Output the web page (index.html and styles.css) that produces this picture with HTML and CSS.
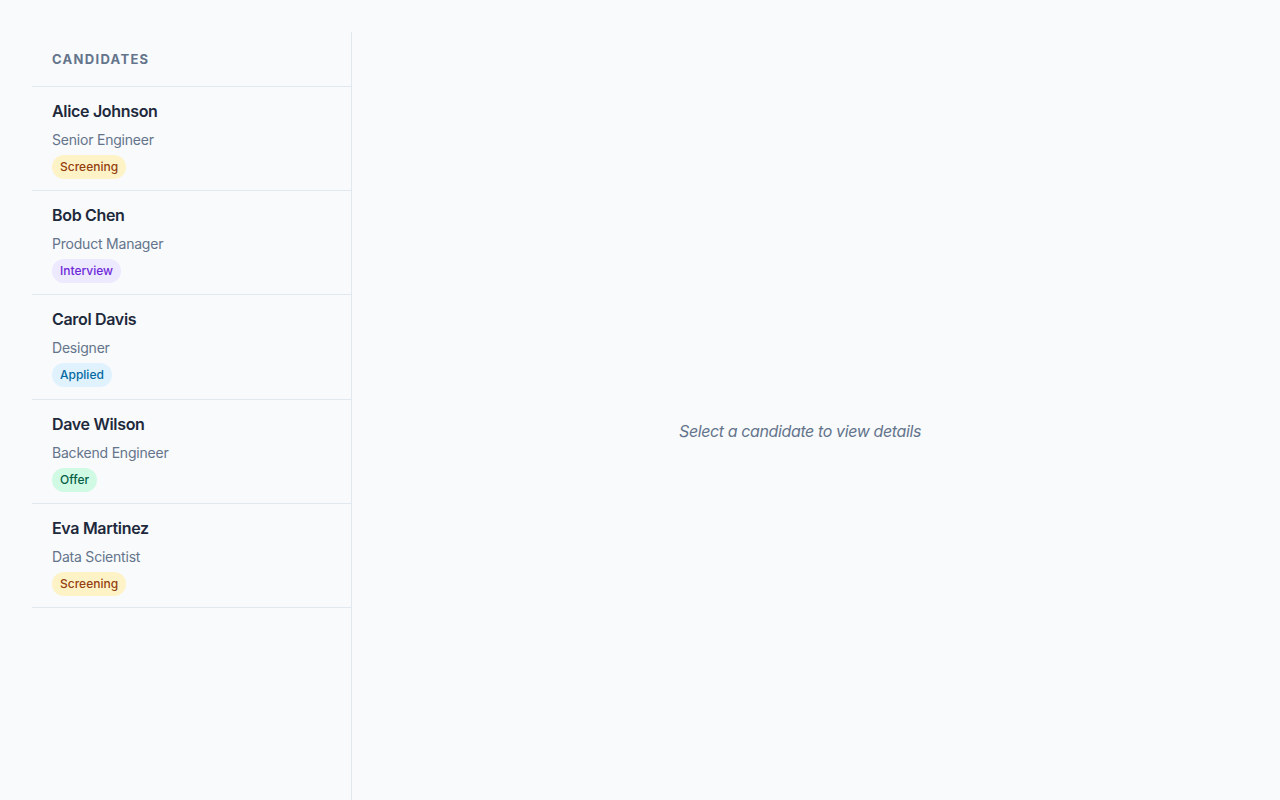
FILE: index.html
```html
<!DOCTYPE html>
<html lang="en">
<head>
<meta charset="utf-8">
<title>Candidates</title>
<link rel="stylesheet" href="styles.css">
</head>
<body>
<div class="app">
  <aside class="sidebar">
    <div class="sidebar-header">Candidates</div>
    <ul class="list">
      <li class="item">
        <div class="name">Alice Johnson</div>
        <div class="role">Senior Engineer</div>
        <span class="badge badge-screening">Screening</span>
      </li>
      <li class="item">
        <div class="name">Bob Chen</div>
        <div class="role">Product Manager</div>
        <span class="badge badge-interview">Interview</span>
      </li>
      <li class="item">
        <div class="name">Carol Davis</div>
        <div class="role">Designer</div>
        <span class="badge badge-applied">Applied</span>
      </li>
      <li class="item">
        <div class="name">Dave Wilson</div>
        <div class="role">Backend Engineer</div>
        <span class="badge badge-offer">Offer</span>
      </li>
      <li class="item">
        <div class="name">Eva Martinez</div>
        <div class="role">Data Scientist</div>
        <span class="badge badge-screening">Screening</span>
      </li>
    </ul>
  </aside>
  <main class="main">
    <p class="empty">Select a candidate to view details</p>
  </main>
</div>
</body>
</html>
```
FILE: styles.css
```css
* { box-sizing: border-box; }
html, body { margin: 0; padding: 0; }
body {
  background: #f8fafc;
  font-family: Inter, "Noto Sans", "Liberation Sans", sans-serif;
  color: #1e293b;
  padding: 32px;
}
.app {
  display: flex;
  height: 100vh;
}
.sidebar {
  width: 320px;
  flex-shrink: 0;
  border-right: 1px solid #e2e8f0;
}
.sidebar-header {
  padding: 17px 20px 17px;
  font-size: 13px;
  line-height: 20px;
  font-weight: 700;
  letter-spacing: 0.1em;
  text-transform: uppercase;
  color: #64748b;
  border-bottom: 1px solid #e2e8f0;
}
.list { list-style: none; margin: 0; padding: 0; }
.item {
  padding: 12px 20px 11.2px;
  border-bottom: 1px solid #e2e8f0;
}
.name {
  font-size: 16px;
  line-height: 24px;
  font-weight: 600;
  letter-spacing: -0.02em;
  color: #1e293b;
  margin-bottom: 6px;
}
.role {
  font-size: 14px;
  line-height: 21px;
  letter-spacing: -0.015em;
  color: #64748b;
  margin-bottom: 5px;
}
.badge {
  display: inline-block;
  font-size: 12px;
  line-height: 18px;
  padding: 3px 8px;
  border-radius: 9999px;
  font-weight: 500;
}
.badge-screening { background: #fef3c7; color: #92400e; }
.badge-interview { background: #ede9fe; color: #6d28d9; }
.badge-applied { background: #e0f2fe; color: #0369a1; }
.badge-offer { background: #d1fae5; color: #065f46; }
.main {
  flex: 1;
  display: flex;
  align-items: center;
  justify-content: center;
}
.empty {
  margin: 0 0 2px;
  font-size: 16px;
  line-height: 24px;
  font-style: italic;
  letter-spacing: -0.024em;
  color: #64748b;
}
```
